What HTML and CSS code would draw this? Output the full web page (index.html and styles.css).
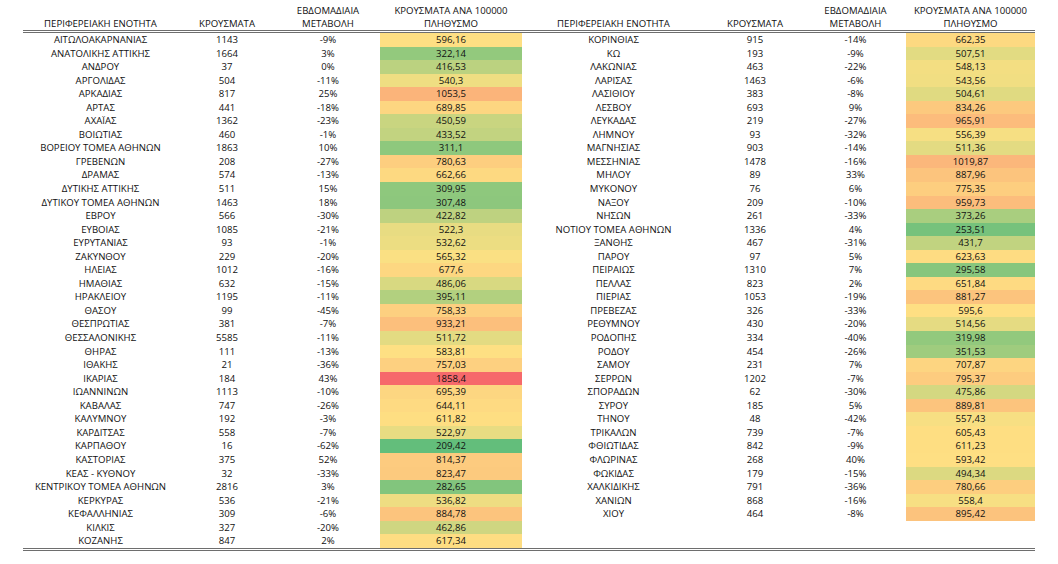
FILE: index.html
```html
<!DOCTYPE html>
<html lang="el">
<head>
<meta charset="utf-8">
<title>Κρούσματα ανά περιφερειακή ενότητα</title>
<link rel="stylesheet" href="styles.css">
</head>
<body>
<main class="sheet">
  <div class="grid head">
    <div class="c">ΠΕΡΙΦΕΡΕΙΑΚΗ ΕΝΟΤΗΤΑ</div>
    <div class="c">ΚΡΟΥΣΜΑΤΑ</div>
    <div class="c">ΕΒΔΟΜΑΔΙΑΙΑ<br>ΜΕΤΑΒΟΛΗ</div>
    <div class="c">ΚΡΟΥΣΜΑΤΑ ΑΝΑ 100000<br>ΠΛΗΘΥΣΜΟ</div>
    <div class="c">ΠΕΡΙΦΕΡΕΙΑΚΗ ΕΝΟΤΗΤΑ</div>
    <div class="c">ΚΡΟΥΣΜΑΤΑ</div>
    <div class="c">ΕΒΔΟΜΑΔΙΑΙΑ<br>ΜΕΤΑΒΟΛΗ</div>
    <div class="c">ΚΡΟΥΣΜΑΤΑ ΑΝΑ 100000<br>ΠΛΗΘΥΣΜΟ</div>
  </div>
  <div class="grid body">
    <div class="c">ΑΙΤΩΛΟΑΚΑΡΝΑΝΙΑΣ</div><div class="c">1143</div><div class="c">-9%</div><div class="c scale">596,16</div>
    <div class="c">ΚΟΡΙΝΘΙΑΣ</div><div class="c">915</div><div class="c">-14%</div><div class="c scale">662,35</div>

    <div class="c">ΑΝΑΤΟΛΙΚΗΣ ΑΤΤΙΚΗΣ</div><div class="c">1664</div><div class="c">3%</div><div class="c scale">322,14</div>
    <div class="c">ΚΩ</div><div class="c">193</div><div class="c">-9%</div><div class="c scale">507,51</div>

    <div class="c">ΑΝΔΡΟΥ</div><div class="c">37</div><div class="c">0%</div><div class="c scale">416,53</div>
    <div class="c">ΛΑΚΩΝΙΑΣ</div><div class="c">463</div><div class="c">-22%</div><div class="c scale">548,13</div>

    <div class="c">ΑΡΓΟΛΙΔΑΣ</div><div class="c">504</div><div class="c">-11%</div><div class="c scale">540,3</div>
    <div class="c">ΛΑΡΙΣΑΣ</div><div class="c">1463</div><div class="c">-6%</div><div class="c scale">543,56</div>

    <div class="c">ΑΡΚΑΔΙΑΣ</div><div class="c">817</div><div class="c">25%</div><div class="c scale">1053,5</div>
    <div class="c">ΛΑΣΙΘΙΟΥ</div><div class="c">383</div><div class="c">-8%</div><div class="c scale">504,61</div>

    <div class="c">ΑΡΤΑΣ</div><div class="c">441</div><div class="c">-18%</div><div class="c scale">689,85</div>
    <div class="c">ΛΕΣΒΟΥ</div><div class="c">693</div><div class="c">9%</div><div class="c scale">834,26</div>

    <div class="c">ΑΧΑΪΑΣ</div><div class="c">1362</div><div class="c">-23%</div><div class="c scale">450,59</div>
    <div class="c">ΛΕΥΚΑΔΑΣ</div><div class="c">219</div><div class="c">-27%</div><div class="c scale">965,91</div>

    <div class="c">ΒΟΙΩΤΙΑΣ</div><div class="c">460</div><div class="c">-1%</div><div class="c scale">433,52</div>
    <div class="c">ΛΗΜΝΟΥ</div><div class="c">93</div><div class="c">-32%</div><div class="c scale">556,39</div>

    <div class="c">ΒΟΡΕΙΟΥ ΤΟΜΕΑ ΑΘΗΝΩΝ</div><div class="c">1863</div><div class="c">10%</div><div class="c scale">311,1</div>
    <div class="c">ΜΑΓΝΗΣΙΑΣ</div><div class="c">903</div><div class="c">-14%</div><div class="c scale">511,36</div>

    <div class="c">ΓΡΕΒΕΝΩΝ</div><div class="c">208</div><div class="c">-27%</div><div class="c scale">780,63</div>
    <div class="c">ΜΕΣΣΗΝΙΑΣ</div><div class="c">1478</div><div class="c">-16%</div><div class="c scale">1019,87</div>

    <div class="c">ΔΡΑΜΑΣ</div><div class="c">574</div><div class="c">-13%</div><div class="c scale">662,66</div>
    <div class="c">ΜΗΛΟΥ</div><div class="c">89</div><div class="c">33%</div><div class="c scale">887,96</div>

    <div class="c">ΔΥΤΙΚΗΣ ΑΤΤΙΚΗΣ</div><div class="c">511</div><div class="c">15%</div><div class="c scale">309,95</div>
    <div class="c">ΜΥΚΟΝΟΥ</div><div class="c">76</div><div class="c">6%</div><div class="c scale">775,35</div>

    <div class="c">ΔΥΤΙΚΟΥ ΤΟΜΕΑ ΑΘΗΝΩΝ</div><div class="c">1463</div><div class="c">18%</div><div class="c scale">307,48</div>
    <div class="c">ΝΑΞΟΥ</div><div class="c">209</div><div class="c">-10%</div><div class="c scale">959,73</div>

    <div class="c">ΕΒΡΟΥ</div><div class="c">566</div><div class="c">-30%</div><div class="c scale">422,82</div>
    <div class="c">ΝΗΣΩΝ</div><div class="c">261</div><div class="c">-33%</div><div class="c scale">373,26</div>

    <div class="c">ΕΥΒΟΙΑΣ</div><div class="c">1085</div><div class="c">-21%</div><div class="c scale">522,3</div>
    <div class="c">ΝΟΤΙΟΥ ΤΟΜΕΑ ΑΘΗΝΩΝ</div><div class="c">1336</div><div class="c">4%</div><div class="c scale">253,51</div>

    <div class="c">ΕΥΡΥΤΑΝΙΑΣ</div><div class="c">93</div><div class="c">-1%</div><div class="c scale">532,62</div>
    <div class="c">ΞΑΝΘΗΣ</div><div class="c">467</div><div class="c">-31%</div><div class="c scale">431,7</div>

    <div class="c">ΖΑΚΥΝΘΟΥ</div><div class="c">229</div><div class="c">-20%</div><div class="c scale">565,32</div>
    <div class="c">ΠΑΡΟΥ</div><div class="c">97</div><div class="c">5%</div><div class="c scale">623,63</div>

    <div class="c">ΗΛΕΙΑΣ</div><div class="c">1012</div><div class="c">-16%</div><div class="c scale">677,6</div>
    <div class="c">ΠΕΙΡΑΙΩΣ</div><div class="c">1310</div><div class="c">7%</div><div class="c scale">295,58</div>

    <div class="c">ΗΜΑΘΙΑΣ</div><div class="c">632</div><div class="c">-15%</div><div class="c scale">486,06</div>
    <div class="c">ΠΕΛΛΑΣ</div><div class="c">823</div><div class="c">2%</div><div class="c scale">651,84</div>

    <div class="c">ΗΡΑΚΛΕΙΟΥ</div><div class="c">1195</div><div class="c">-11%</div><div class="c scale">395,11</div>
    <div class="c">ΠΙΕΡΙΑΣ</div><div class="c">1053</div><div class="c">-19%</div><div class="c scale">881,27</div>

    <div class="c">ΘΑΣΟΥ</div><div class="c">99</div><div class="c">-45%</div><div class="c scale">758,33</div>
    <div class="c">ΠΡΕΒΕΖΑΣ</div><div class="c">326</div><div class="c">-33%</div><div class="c scale">595,6</div>

    <div class="c">ΘΕΣΠΡΩΤΙΑΣ</div><div class="c">381</div><div class="c">-7%</div><div class="c scale">933,21</div>
    <div class="c">ΡΕΘΥΜΝΟΥ</div><div class="c">430</div><div class="c">-20%</div><div class="c scale">514,56</div>

    <div class="c">ΘΕΣΣΑΛΟΝΙΚΗΣ</div><div class="c">5585</div><div class="c">-11%</div><div class="c scale">511,72</div>
    <div class="c">ΡΟΔΟΠΗΣ</div><div class="c">334</div><div class="c">-40%</div><div class="c scale">319,98</div>

    <div class="c">ΘΗΡΑΣ</div><div class="c">111</div><div class="c">-13%</div><div class="c scale">583,81</div>
    <div class="c">ΡΟΔΟΥ</div><div class="c">454</div><div class="c">-26%</div><div class="c scale">351,53</div>

    <div class="c">ΙΘΑΚΗΣ</div><div class="c">21</div><div class="c">-36%</div><div class="c scale">757,03</div>
    <div class="c">ΣΑΜΟΥ</div><div class="c">231</div><div class="c">7%</div><div class="c scale">707,87</div>

    <div class="c">ΙΚΑΡΙΑΣ</div><div class="c">184</div><div class="c">43%</div><div class="c scale">1858,4</div>
    <div class="c">ΣΕΡΡΩΝ</div><div class="c">1202</div><div class="c">-7%</div><div class="c scale">795,37</div>

    <div class="c">ΙΩΑΝΝΙΝΩΝ</div><div class="c">1113</div><div class="c">-10%</div><div class="c scale">695,39</div>
    <div class="c">ΣΠΟΡΑΔΩΝ</div><div class="c">62</div><div class="c">-30%</div><div class="c scale">475,86</div>

    <div class="c">ΚΑΒΑΛΑΣ</div><div class="c">747</div><div class="c">-26%</div><div class="c scale">644,11</div>
    <div class="c">ΣΥΡΟΥ</div><div class="c">185</div><div class="c">5%</div><div class="c scale">889,81</div>

    <div class="c">ΚΑΛΥΜΝΟΥ</div><div class="c">192</div><div class="c">-3%</div><div class="c scale">611,82</div>
    <div class="c">ΤΗΝΟΥ</div><div class="c">48</div><div class="c">-42%</div><div class="c scale">557,43</div>

    <div class="c">ΚΑΡΔΙΤΣΑΣ</div><div class="c">558</div><div class="c">-7%</div><div class="c scale">522,97</div>
    <div class="c">ΤΡΙΚΑΛΩΝ</div><div class="c">739</div><div class="c">-7%</div><div class="c scale">605,43</div>

    <div class="c">ΚΑΡΠΑΘΟΥ</div><div class="c">16</div><div class="c">-62%</div><div class="c scale">209,42</div>
    <div class="c">ΦΘΙΩΤΙΔΑΣ</div><div class="c">842</div><div class="c">-9%</div><div class="c scale">611,23</div>

    <div class="c">ΚΑΣΤΟΡΙΑΣ</div><div class="c">375</div><div class="c">52%</div><div class="c scale">814,37</div>
    <div class="c">ΦΛΩΡΙΝΑΣ</div><div class="c">268</div><div class="c">40%</div><div class="c scale">593,42</div>

    <div class="c">ΚΕΑΣ - ΚΥΘΝΟΥ</div><div class="c">32</div><div class="c">-33%</div><div class="c scale">823,47</div>
    <div class="c">ΦΩΚΙΔΑΣ</div><div class="c">179</div><div class="c">-15%</div><div class="c scale">494,34</div>

    <div class="c">ΚΕΝΤΡΙΚΟΥ ΤΟΜΕΑ ΑΘΗΝΩΝ</div><div class="c">2816</div><div class="c">3%</div><div class="c scale">282,65</div>
    <div class="c">ΧΑΛΚΙΔΙΚΗΣ</div><div class="c">791</div><div class="c">-36%</div><div class="c scale">780,66</div>

    <div class="c">ΚΕΡΚΥΡΑΣ</div><div class="c">536</div><div class="c">-21%</div><div class="c scale">536,82</div>
    <div class="c">ΧΑΝΙΩΝ</div><div class="c">868</div><div class="c">-16%</div><div class="c scale">558,4</div>

    <div class="c">ΚΕΦΑΛΛΗΝΙΑΣ</div><div class="c">309</div><div class="c">-6%</div><div class="c scale">884,78</div>
    <div class="c">ΧΙΟΥ</div><div class="c">464</div><div class="c">-8%</div><div class="c scale">895,42</div>

    <div class="c">ΚΙΛΚΙΣ</div><div class="c">327</div><div class="c">-20%</div><div class="c scale">462,86</div>
    <div class="c"></div><div class="c"></div><div class="c"></div><div class="c"></div>

    <div class="c">ΚΟΖΑΝΗΣ</div><div class="c">847</div><div class="c">2%</div><div class="c scale">617,34</div>
    <div class="c"></div><div class="c"></div><div class="c"></div><div class="c"></div>
  </div>
</main>
<script src="script.js"></script>
</body>
</html>
```

FILE: styles.css
```css
html, body {
  margin: 0;
  padding: 0;
  background: #ffffff;
}

body {
  font-family: "Open Sans", "Liberation Sans", sans-serif;
  font-size: 9.6px;
  color: #111111;
}

.sheet {
  padding-left: 23px;
  width: 1012px;
}

.grid {
  display: grid;
  grid-template-columns: 155px 98px 104px 142px 183px 100px 101px 129px;
}

.head {
  height: 33px;
  box-sizing: border-box;
  border-bottom: 3px double #6e6e6e;
}

.head .c {
  display: flex;
  align-items: flex-end;
  justify-content: center;
  text-align: center;
  line-height: 13px;
  white-space: nowrap;
}

.body {
  grid-auto-rows: 13.55px;
  border-bottom: 3px double #6e6e6e;
}

.body .c {
  text-align: center;
  line-height: 13.55px;
  white-space: nowrap;
}
```

FILE: script.js
```js
(function () {
  var cells = Array.prototype.slice.call(document.querySelectorAll('.scale'));
  var vals = cells.map(function (c) {
    return parseFloat(c.textContent.replace(',', '.'));
  });
  var sorted = vals.slice().sort(function (a, b) { return a - b; });
  var n = sorted.length;
  var med = n % 2 ? sorted[(n - 1) / 2] : (sorted[n / 2 - 1] + sorted[n / 2]) / 2;
  var min = sorted[0];
  var max = sorted[n - 1];
  var lo = [99, 190, 123];
  var mid = [254, 225, 131];
  var hi = [246, 105, 107];
  function mix(a, b, t) {
    return a.map(function (v, i) { return Math.round(v + (b[i] - v) * t); });
  }
  cells.forEach(function (c, i) {
    var v = vals[i];
    var rgb = v <= med ? mix(lo, mid, (v - min) / (med - min)) : mix(mid, hi, (v - med) / (max - med));
    c.style.backgroundColor = 'rgb(' + rgb.join(',') + ')';
  });
})();
```
